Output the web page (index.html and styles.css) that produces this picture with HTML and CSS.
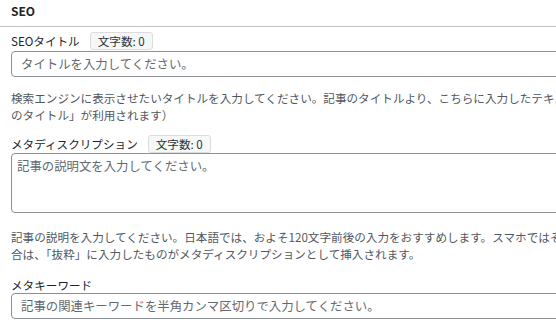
FILE: index.html
```html
<!DOCTYPE html>
<html lang="ja">
<head>
<meta charset="utf-8">
<link rel="stylesheet" href="styles.css">
</head>
<body>
<div class="panel">
  <h2 class="panel-title">SEO</h2>
  <div class="panel-body">
    <div class="field">
      <div class="label-row">
        <label class="label" for="seo-title">SEOタイトル</label>
        <span class="count">文字数: 0</span>
      </div>
      <input id="seo-title" class="input" type="text" placeholder="タイトルを入力してください。">
      <p class="desc">検索エンジンに表示させたいタイトルを入力してください。記事のタイトルより、こちらに入力したテキストが優先的にタイトルタグ（&lt;title&gt;）に挿入されます。（一覧ページでは「〇〇<br>のタイトル」が利用されます）</p>
    </div>
    <div class="field">
      <div class="label-row">
        <label class="label" for="meta-desc">メタディスクリプション</label>
        <span class="count">文字数: 0</span>
      </div>
      <textarea id="meta-desc" class="textarea" placeholder="記事の説明文を入力してください。"></textarea>
      <p class="desc desc-after-area">記事の説明を入力してください。日本語では、およそ120文字前後の入力をおすすめします。スマホではそのうち約50文字が表示されます。未入力の場<br>合は、「抜粋」に入力したものがメタディスクリプションとして挿入されます。</p>
    </div>
    <div class="field">
      <label class="label label-plain" for="meta-keywords">メタキーワード</label>
      <input id="meta-keywords" class="input" type="text" placeholder="記事の関連キーワードを半角カンマ区切りで入力してください。">
    </div>
  </div>
</div>
</body>
</html>
```

FILE: styles.css
```css
html, body {
  margin: 0;
  padding: 0;
  background: #ffffff;
  overflow: hidden;
}

body {
  font-family: "Noto Sans CJK JP", "Noto Sans", sans-serif;
  color: #1d2327;
}

.panel {
  width: 900px;
}

.panel-title {
  margin: 0;
  padding: 3px 11px 7px;
  font-size: 12px;
  line-height: 16px;
  font-weight: 700;
  color: #1d2327;
  border-bottom: 1px solid #c3c4c7;
}

.panel-body {
  padding: 5px 11px 0;
}

.field {
  display: flex;
  flex-direction: column;
  align-items: flex-start;
}

.label-row {
  display: flex;
  align-items: center;
  gap: 10px;
  height: 18px;
}

.field + .field .label-row {
  margin-top: 11px;
}

.label {
  font-size: 11.6px;
  line-height: 16px;
  color: #1d2327;
}

.label-plain {
  margin-top: 14px;
}

.count {
  box-sizing: border-box;
  height: 18px;
  padding: 0 7px;
  font-size: 11.6px;
  line-height: 16px;
  color: #2c3338;
  background: #f6f7f7;
  border: 1px solid #dcdcde;
  border-radius: 3px;
}

.input,
.textarea {
  box-sizing: border-box;
  display: block;
  width: 760px;
  margin: 1px 0 0;
  font-family: inherit;
  font-size: 12.4px;
  color: #2c3338;
  background: #ffffff;
  border: 1px solid #8c8f94;
  border-radius: 4px;
  outline: none;
}

.input {
  height: 26px;
  padding: 0 9px;
}

.label-plain + .input {
  margin-top: 0;
}

.textarea {
  height: 60px;
  margin-top: 0;
  padding: 4px 5px;
  line-height: 17px;
  resize: none;
}

.input::placeholder,
.textarea::placeholder {
  color: #646970;
  opacity: 1;
}

.desc {
  margin: 13px 0 0;
  font-size: 11.6px;
  line-height: 17px;
  color: #50575e;
  white-space: nowrap;
}

.desc-after-area {
  margin-top: 16px;
}
```
